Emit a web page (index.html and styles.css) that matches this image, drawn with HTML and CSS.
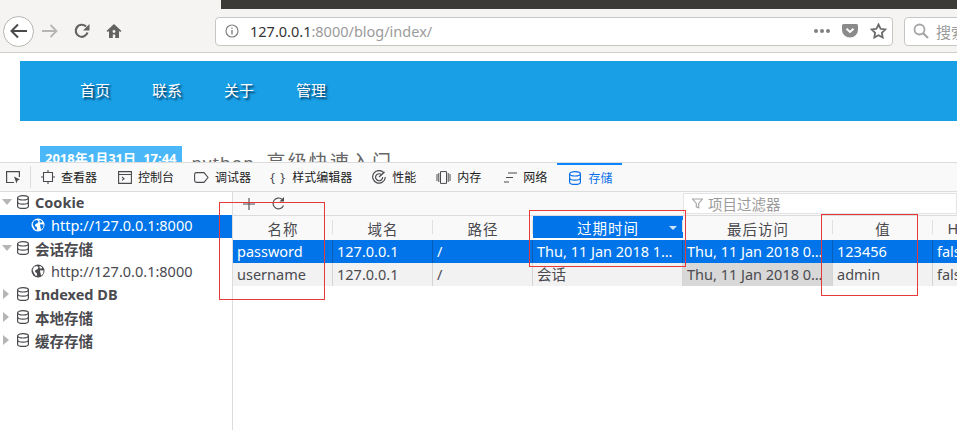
FILE: index.html
```html
<!DOCTYPE html>
<html lang="zh-CN">
<head>
    <meta charset="UTF-8">
    <title>127.0.0.1:8000/blog/index/</title>
    <link rel="stylesheet" href="styles.css">
</head>
<body>
    <svg class="defs" width="0" height="0">
        <symbol id="db" viewBox="0 0 14 14">
            <g fill="none" stroke="currentColor" stroke-width="1.2">
                <ellipse cx="7" cy="2.8" rx="5.4" ry="2.2"/>
                <path d="M1.6 2.8v8.4c0 1.2 2.4 2.2 5.4 2.2s5.400-1 5.400-2.200V2.800"/>
                <path d="M1.600 7c0 1.200 2.400 2.200 5.400 2.200s5.400-1 5.400-2.200"/>
            </g>
        </symbol>
        <symbol id="globe" viewBox="0 0 14 14">
            <circle cx="7" cy="7" r="6.500" fill="currentColor"/>
            <path class="globe-land" d="M3 2.800l3-.8 1.500 1.500-1 1.800-2 .6-.5 2 1.800 1 .4 2.600-1.400.6-2-3L1.600 6zM8.500 1.800l2.700 1.400-.8 1.600-1.700-.5zM9 6.200l3.600.4-.4 3-2 2.200-.8-2.800z"/>
        </symbol>
    </svg>

    <div class="topstrip"></div>

    <header class="browser-bar">
        <button class="back-btn">
            <svg width="18" height="16" viewBox="0 0 18 16"><path d="M8 1.500L1.500 8 8 14.500M2 8h15" fill="none" stroke="#4a4a4a" stroke-width="2"/></svg>
        </button>
        <svg class="fwd-icon" width="17" height="14" viewBox="0 0 17 14"><path d="M9.500 1L15.500 7l-6 6M1 7h14" fill="none" stroke="#b5b5b5" stroke-width="1.800"/></svg>
        <svg class="reload-icon" width="16" height="16" viewBox="0 0 16 16"><path d="M13.500 9.500A6 6 0 1 1 12 3.500" fill="none" stroke="#636363" stroke-width="2.200"/><path d="M15.500 1v6.500H9z" fill="#636363"/></svg>
        <svg class="home-icon" width="16" height="16" viewBox="0 0 16 16"><path d="M8 1L.5 8l1.300 1L3 8v7h3.800v-3.500h2.400V15H13V8l1.200 1 1.300-1z" fill="#636363"/><circle cx="8" cy="8.500" r="1.400" fill="#f5f4f2"/></svg>
        <div class="urlbar">
            <svg class="info-icon" width="14" height="14" viewBox="0 0 14 14"><circle cx="7" cy="7" r="6" fill="none" stroke="#808080" stroke-width="1.200"/><path d="M7 6v4.500M7 3.400v1.400" stroke="#808080" stroke-width="1.400"/></svg>
            <span class="url"><b>127.0.0.1</b>:8000/blog/index/</span>
            <span class="url-dots"><i></i><i></i><i></i></span>
            <svg width="16" height="14" viewBox="0 0 16 14"><path d="M1.500 0h13A1.500 1.500 0 0 1 16 1.500V6a8 7.500 0 0 1-16 0V1.500A1.500 1.500 0 0 1 1.500 0z" fill="#8a8a8a"/><path d="M4.500 4.800L8 8l3.500-3.200" fill="none" stroke="#fff" stroke-width="2"/></svg>
            <svg class="star-icon" width="17" height="16" viewBox="0 0 17 16"><path d="M8.500 1.500l2.100 4.300 4.700.7-3.400 3.300.8 4.700-4.200-2.200-4.200 2.200.8-4.700-3.400-3.300 4.700-.7z" fill="none" stroke="#6a6a6a" stroke-width="1.800"/></svg>
        </div>
        <div class="searchbar">
            <svg width="16" height="16" viewBox="0 0 16 16"><circle cx="6.500" cy="6.500" r="5" fill="none" stroke="#a5a5a5" stroke-width="1.800"/><path d="M10.200 10.200L15 15" stroke="#a5a5a5" stroke-width="2.200"/></svg>
            <span>搜索</span>
        </div>
    </header>

    <section class="page">
        <nav class="site-nav">
            <a>首页</a>
            <a>联系</a>
            <a>关于</a>
            <a>管理</a>
        </nav>
        <div class="post-line">
            <span class="post-date">2018年1月31日, 17:44</span>
            <span class="post-title">python <span class="post-title-cn">高级快速入门</span></span>
        </div>
    </section>

    <section class="devtools">
        <div class="tabs">
            <svg class="picker" width="15" height="13" viewBox="0 0 15 13"><path d="M8 11.500H.6V.6h12.800V6" fill="none" stroke="#4a4a4f" stroke-width="1.200"/><path d="M8 5.500l6 3-2.500 1-1 3z" fill="#4a4a4f"/></svg>
            <span class="tab-sep"></span>
            <a class="tab tab-first"><svg width="14" height="14" viewBox="0 0 14 14"><path d="M2.500 2.500h9v9h-9zM7 0v2.500M7 11.500V14M0 7h2.500M11.500 7H14" fill="none" stroke="#4a4a4f" stroke-width="1.100"/></svg>查看器</a>
            <a class="tab tab-console"><svg width="14" height="13" viewBox="0 0 14 13"><path d="M.6.600h12.800v11.800H.6zM.6 3.500h12.800M4 6l2 1.700L4 9.400" fill="none" stroke="#4a4a4f" stroke-width="1.100"/></svg>控制台</a>
            <a class="tab"><svg width="15" height="11" viewBox="0 0 15 11"><path d="M2.500.6h7.500l4 4.900-4 4.900H2.500A1.900 1.900 0 0 1 .6 8.500v-6A1.900 1.900 0 0 1 2.500.6z" fill="none" stroke="#4a4a4f" stroke-width="1.100"/></svg>调试器</a>
            <a class="tab tab-style"><span class="braces">{ }</span>样式编辑器</a>
            <a class="tab"><svg width="14" height="14" viewBox="0 0 14 14"><path d="M12 3a6.300 6.300 0 1 0 1.300 4M9.800 5a3.500 3.500 0 1 0 .8 2" fill="none" stroke="#4a4a4f" stroke-width="1.200"/><path d="M7 7l5.500-5" stroke="#4a4a4f" stroke-width="1.200"/></svg>性能</a>
            <a class="tab"><svg width="15" height="13" viewBox="0 0 15 13"><path d="M4.500.6h6v11.800h-6zM1 3v7M2.800 2v9M12.200 2v9M14 3v7" fill="none" stroke="#4a4a4f" stroke-width="1"/></svg>内存</a>
            <a class="tab tab-net"><svg width="13" height="11" viewBox="0 0 13 11"><path d="M4 1h9M2 5.500h7M0 10h5" stroke="#4a4a4f" stroke-width="1.100"/></svg>网络</a>
            <a class="tab tab-active"><svg width="14" height="14"><use href="#db"/></svg>存储</a>
        </div>
        <div class="panes">
            <aside class="tree">
                <div class="tree-row tree-head"><span class="arrow arrow-open"></span><svg class="db-icon" width="14" height="14"><use href="#db"/></svg>Cookie</div>
                <div class="tree-row tree-leaf tree-selected"><svg class="globe-icon" width="14" height="14"><use href="#globe"/></svg>http://127.0.0.1:8000</div>
                <div class="tree-row tree-head"><span class="arrow arrow-open"></span><svg class="db-icon" width="14" height="14"><use href="#db"/></svg>会话存储</div>
                <div class="tree-row tree-leaf"><svg class="globe-icon" width="14" height="14"><use href="#globe"/></svg>http://127.0.0.1:8000</div>
                <div class="tree-row tree-head"><span class="arrow"></span><svg class="db-icon" width="14" height="14"><use href="#db"/></svg>Indexed DB</div>
                <div class="tree-row tree-head"><span class="arrow"></span><svg class="db-icon" width="14" height="14"><use href="#db"/></svg>本地存储</div>
                <div class="tree-row tree-head"><span class="arrow"></span><svg class="db-icon" width="14" height="14"><use href="#db"/></svg>缓存存储</div>
            </aside>
            <div class="storage">
                <div class="storage-bar">
                    <svg class="add-icon" width="12" height="12" viewBox="0 0 12 12"><path d="M6 0v12M0 6h12" stroke="#4a4a4f" stroke-width="1.100"/></svg>
                    <svg class="refresh-icon" width="13" height="13" viewBox="0 0 13 13"><path d="M11.500 8.500A5.400 5.400 0 1 1 9.800 2.200" fill="none" stroke="#4a4a4f" stroke-width="1.100"/><path d="M12 0v4.500H7.500z" fill="#4a4a4f"/></svg>
                    <div class="filter">
                        <svg width="11" height="11" viewBox="0 0 11 11"><path d="M.6 1h9.800L6.700 5.500v4.300l-2.400-1V5.500z" fill="none" stroke="#a5a5a5" stroke-width="1.100"/></svg>
                        <span>项目过滤器</span>
                    </div>
                </div>
                <div class="grid">
                    <div class="cell th">名称</div>
                    <div class="cell th">域名</div>
                    <div class="cell th">路径</div>
                    <div class="cell th th-sorted">过期时间<span class="sort-arrow"></span></div>
                    <div class="cell th">最后访问</div>
                    <div class="cell th">值</div>
                    <div class="cell th">HostOnly</div>

                    <div class="cell selected">password</div>
                    <div class="cell selected">127.0.0.1</div>
                    <div class="cell selected">/</div>
                    <div class="cell selected">Thu, 11 Jan 2018 1…</div>
                    <div class="cell selected">Thu, 11 Jan 2018 0…</div>
                    <div class="cell selected">123456</div>
                    <div class="cell selected">false</div>

                    <div class="cell odd">username</div>
                    <div class="cell odd">127.0.0.1</div>
                    <div class="cell odd">/</div>
                    <div class="cell odd">会话</div>
                    <div class="cell odd sorted-col">Thu, 11 Jan 2018 0…</div>
                    <div class="cell odd">admin</div>
                    <div class="cell odd">false</div>
                </div>
            </div>
        </div>
    </section>

    <div class="mark mark-name"></div>
    <div class="mark mark-expires"></div>
    <div class="mark mark-value"></div>
</body>
</html>
```

FILE: styles.css
```css
html, body {
    margin: 0;
    padding: 0;
    height: 430px;
    overflow: hidden;
    background: #fff;
    font-family: "Noto Sans", "Noto Sans CJK SC", sans-serif;
}
.defs {
    position: absolute;
}
.topstrip {
    position: absolute;
    left: 221px;
    top: 0;
    width: 736px;
    height: 9px;
    background: #3c3b37;
    z-index: 5;
}

/* browser toolbar */
.browser-bar {
    height: 53px;
    box-sizing: border-box;
    padding: 17px 0 7px 3px;
    display: flex;
    align-items: center;
    background: #f5f4f2;
    border-bottom: 1px solid #cfcdca;
    overflow: hidden;
}
.back-btn {
    width: 31px;
    height: 31px;
    flex: none;
    padding: 0;
    display: flex;
    align-items: center;
    justify-content: center;
    border: 1px solid #b8b6b3;
    border-radius: 50%;
    background: #fff;
}
.fwd-icon {
    margin-left: 7px;
    flex: none;
}
.reload-icon {
    margin-left: 16px;
    flex: none;
}
.home-icon {
    margin-left: 16px;
    flex: none;
}
.urlbar {
    width: 678px;
    height: 29px;
    box-sizing: border-box;
    margin-left: 93px;
    padding: 0 5px 0 9px;
    flex: none;
    display: flex;
    align-items: center;
    background: #fff;
    border: 1px solid #c8c6c3;
    border-radius: 4px;
}
.url {
    margin-left: 11px;
    font-size: 14.500px;
    color: #9b9b9b;
    flex: 1;
}
.url b {
    font-weight: 400;
    color: #333;
}
.url-dots {
    display: flex;
    gap: 2px;
    margin-right: 12px;
}
.url-dots i {
    width: 4px;
    height: 4px;
    border-radius: 50%;
    background: #808080;
}
.star-icon {
    margin-left: 12px;
}
.searchbar {
    width: 70px;
    height: 29px;
    box-sizing: border-box;
    margin-left: 11px;
    padding-left: 8px;
    flex: none;
    display: flex;
    align-items: center;
    gap: 7px;
    background: #fff;
    border: 1px solid #c8c6c3;
    border-radius: 4px;
    font-size: 15px;
    color: #9b9b9b;
    white-space: nowrap;
}

/* page behind the devtools */
.page {
    height: 109px;
    box-sizing: border-box;
    padding: 8px 0 0 20px;
    overflow: hidden;
}
.site-nav {
    height: 60px;
    box-sizing: border-box;
    padding: 0 0 4px 60px;
    display: flex;
    align-items: center;
    gap: 42px;
    background: #189fe6;
}
.site-nav a {
    font-size: 15px;
    color: #fff;
    text-shadow: 2px 2px 2px #06365a;
}
.post-line {
    margin: 25px 0 0 20px;
    display: flex;
    align-items: flex-start;
}
.post-date {
    height: 24px;
    padding: 0 5px;
    background: #4ab8f8;
    color: #fff;
    font-size: 13px;
    font-weight: 700;
    line-height: 24px;
    white-space: nowrap;
}
.post-title {
    margin-left: 10px;
    font-size: 17px;
    color: #666;
    letter-spacing: 1.200px;
    line-height: 33px;
    white-space: pre;
}
.post-title-cn {
    margin-left: 6px;
    font-size: 19px;
    letter-spacing: 2.100px;
}

/* devtools */
.devtools {
    height: 268px;
    box-sizing: border-box;
    border-top: 1px solid #dcdcdc;
    background: #fff;
    font-size: 14.500px;
    color: #4a4a4f;
}
.tabs {
    height: 28px;
    display: flex;
    align-items: center;
    background: #f9f9fa;
    border-bottom: 1px solid #dcdcdc;
    font-size: 12px;
    color: #222;
}
.picker {
    margin-left: 6px;
    flex: none;
}
.tab-sep {
    width: 1px;
    height: 22px;
    margin-left: 9px;
    background: #dcdcdc;
}
.tab {
    height: 28px;
    box-sizing: border-box;
    padding: 0 10px;
    display: flex;
    align-items: center;
    gap: 6px;
    white-space: nowrap;
}
.tab svg {
    flex: none;
}
.tab-first {
    padding-left: 10px;
}
.tab-console {
    padding-left: 11px;
}
.tab-style {
    padding-left: 9px;
}
.tab-net {
    padding-left: 13px;
}
.braces {
    font-size: 13px;
    color: #4a4a4f;
    letter-spacing: 1px;
}
.tab-active {
    padding: 0 10px 0 11px;
    width: 65px;
    border-top: 2px solid #0a84ff;
    color: #0a6fe8;
}
.panes {
    display: flex;
    height: 239px;
}

/* sidebar tree */
.tree {
    width: 233px;
    box-sizing: border-box;
    flex: none;
    border-right: 1px solid #dcdcdc;
}
.tree-row {
    height: 23px;
    box-sizing: border-box;
    padding-bottom: 3px;
    display: flex;
    align-items: center;
    white-space: nowrap;
}
.tree-head {
    padding-left: 3px;
    font-weight: 700;
}
.tree-leaf {
    padding-left: 31px;
}
.tree-selected {
    background: #0074e8;
    color: #fff;
}
.arrow {
    width: 0;
    height: 0;
    flex: none;
    margin-right: 7px;
    border-left: 6px solid #b5b5b5;
    border-top: 5px solid transparent;
    border-bottom: 5px solid transparent;
}
.arrow-open {
    margin-left: -1px;
    margin-right: 4px;
    border-top: 6px solid #b5b5b5;
    border-left: 5px solid transparent;
    border-right: 5px solid transparent;
    border-bottom: 0;
}
.db-icon {
    margin-right: 5px;
    flex: none;
}
.globe-icon {
    --land: #fff;
    margin-right: 6px;
    flex: none;
}
.globe-land {
    fill: var(--land);
}
.tree-selected .globe-icon {
    --land: #0074e8;
}

/* storage table */
.storage {
    flex: 1;
    min-width: 0;
    overflow: hidden;
}
.storage-bar {
    height: 23px;
    box-sizing: border-box;
    display: flex;
    align-items: center;
    background: #f9f9fa;
    padding-left: 10px;
}
.add-icon {
    flex: none;
}
.refresh-icon {
    margin-left: 17px;
    flex: none;
}
.filter {
    height: 21px;
    box-sizing: border-box;
    margin-left: 398px;
    padding-left: 8px;
    flex: 1;
    display: flex;
    align-items: center;
    gap: 5px;
    background: #fff;
    border: 1px solid #e4e4e4;
    color: #9b9b9b;
    white-space: nowrap;
}
.grid {
    display: grid;
    grid-template-columns: 100px 100px 100px 150px 150px 100px 100px;
    grid-template-rows: 25px 23px 23px;
}
.cell {
    padding: 0 4px 2px;
    display: flex;
    align-items: center;
    overflow: hidden;
    white-space: nowrap;
    border-right: 1px solid #d4d4d4;
    box-sizing: border-box;
}
.th {
    position: relative;
    justify-content: center;
    padding-bottom: 0;
    background: #f9f9fa;
    border-top: 1px solid #dcdcdc;
    border-right: 0;
    letter-spacing: 1px;
}
.th::after {
    content: "";
    position: absolute;
    right: 0;
    top: 4px;
    bottom: 6px;
    width: 1px;
    background: #e0e0e0;
}
.th-sorted {
    background: #0074e8;
    color: #fff;
    margin-bottom: 2px;
}
.sort-arrow {
    position: absolute;
    right: 6px;
    top: 10px;
    border-top: 4px solid #cfe3fa;
    border-left: 4px solid transparent;
    border-right: 4px solid transparent;
}
.selected {
    background: #0074e8;
    color: #fff;
    border-right-color: #0a5cb5;
}
.odd {
    background: #f2f2f2;
}
.sorted-col {
    background: #d8d8d8;
}

/* annotation rectangles on top of the screenshot */
.mark {
    position: absolute;
    box-sizing: border-box;
    border: 1px solid #e6393c;
    z-index: 10;
}
.mark-name {
    left: 219px;
    top: 202px;
    width: 106px;
    height: 98px;
}
.mark-expires {
    left: 529px;
    top: 210px;
    width: 157px;
    height: 57px;
}
.mark-value {
    left: 821px;
    top: 214px;
    width: 97px;
    height: 82px;
}
```
